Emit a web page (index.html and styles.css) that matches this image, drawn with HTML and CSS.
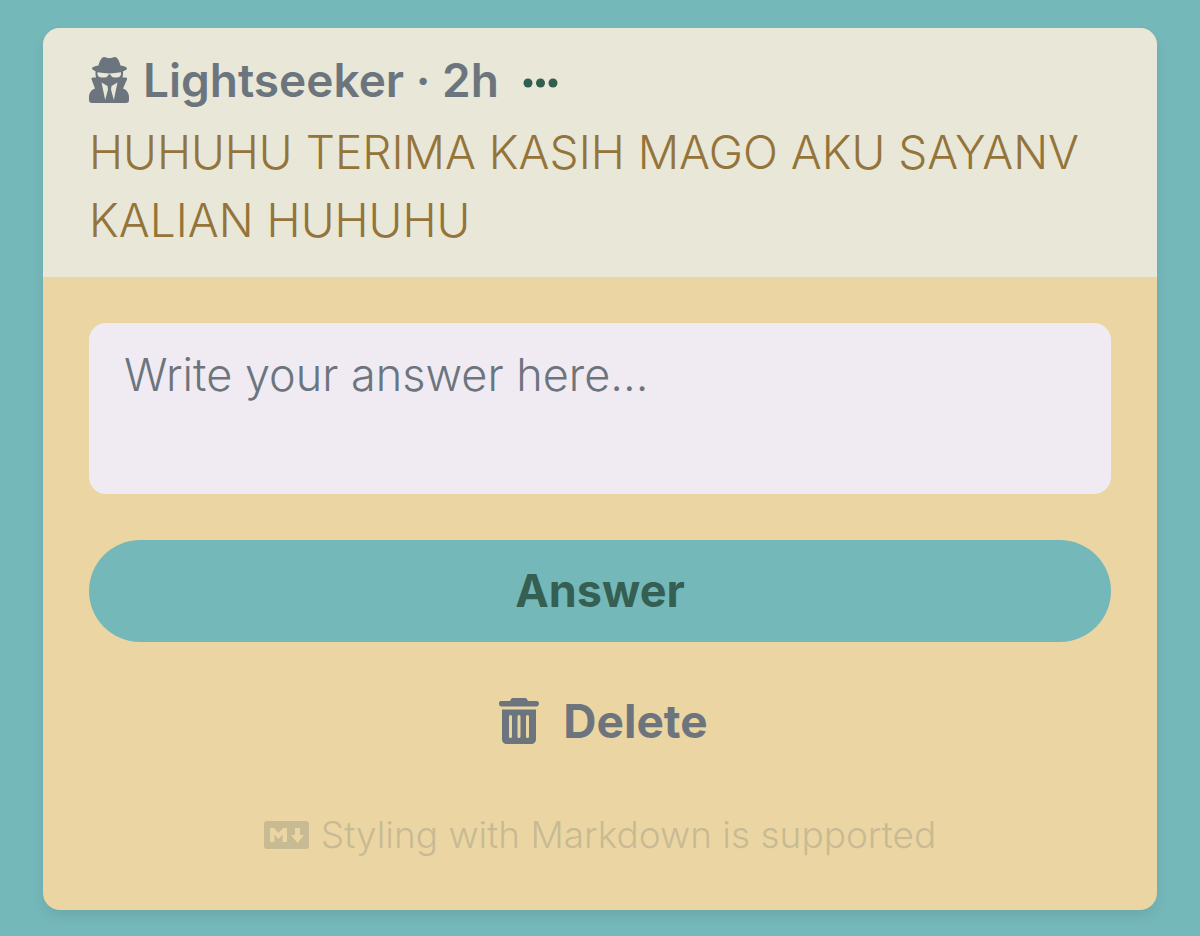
FILE: index.html
```html
<!DOCTYPE html>
<html lang="en">
<head>
<meta charset="utf-8">
<meta name="viewport" content="width=device-width, initial-scale=1">
<title>Inbox</title>
<link rel="stylesheet" href="styles.css">
</head>
<body>
<main class="card">
  <header class="card-header">
    <div class="meta">
      <svg class="icon-spy" viewBox="0 0 40 46" aria-hidden="true">
        <path fill="currentColor" d="M6 14C4 13 3 12.300 3 11.500C3 10.300 5.500 9.300 9.500 8.600C10.500 4.500 12.500 0 15 0C17 0 18.500 1.300 20.500 1.300S24 0 26 0C28.500 0 30.500 4.500 31.500 8.600C35.500 9.300 38 10.300 38 11.500C38 12.300 37 13 35 14C32 15 28 15.600 20.500 15.600S9 15 6 14Z"/>
        <path fill="currentColor" d="M6.500 14H34V17.500L33.500 20.500H36.500C38 20.500 38.400 21.400 38 22.400L34 31.500C37.500 32.500 40 36 40 40V43Q40 46 37 46H3Q0 46 0 43V40C0 36 2.500 32.500 6 31.500L2.600 22.400C2.200 21.400 2.700 20.500 4 20.500H7L6.500 17.500Z"/>
        <path class="spy-gap" d="M8.500 15.300Q20 17.600 32 15.300V17.300C31.500 19.600 30 20.500 28 20.500H25.500C23 20.500 22.300 19 21.800 17.900C21.300 17 19.700 17 19.200 17.900C18.700 19 18 20.500 15.500 20.500H12.500C10.500 20.500 9 19.600 8.500 17.300Z"/>
        <path class="spy-gap" d="M12.500 25.500L18.500 29L19 32.500L16.200 43Z M28.500 25.500L22.500 29L22 32.500L24.800 43Z"/>
      </svg>
      <span class="author">Lightseeker · 2h</span>
      <button class="more" type="button" aria-label="More options">
        <svg class="icon-dots" viewBox="0 0 36 10" aria-hidden="true"><g fill="currentColor"><circle cx="5" cy="5" r="4.500"/><circle cx="17.500" cy="5" r="4.500"/><circle cx="30" cy="5" r="4.500"/></g></svg>
      </button>
    </div>
    <p class="question">HUHUHU TERIMA KASIH MAGO AKU SAYANV KALIAN HUHUHU</p>
  </header>
  <form class="card-body">
    <textarea class="answer-box" aria-label="Your answer" placeholder="Write your answer here..."></textarea>
    <button class="answer" type="button">Answer</button>
    <button class="delete" type="button">
      <svg class="icon-trash" viewBox="0 0 40 46" aria-hidden="true">
        <path fill="currentColor" d="M2.500 3H11L12 1.200C12.500 .4 13 0 14 0H26C27 0 27.500 .4 28 1.200L29 3H37.500C39 3 40 4 40 5.500S39 8.500 37.500 8.500H2.500C1 8.500 0 7.500 0 5.500S1 3 2.500 3Z"/>
        <path fill="currentColor" fill-rule="evenodd" d="M3 11.500H37V41C37 44 35 46 32 46H8C5 46 3 44 3 41ZM11.500 17A1.500 1.500 0 0 0 10 18.500V38.500A1.500 1.500 0 0 0 13 38.500V18.500A1.500 1.500 0 0 0 11.500 17ZM20 17A1.500 1.500 0 0 0 18.500 18.500V38.500A1.500 1.500 0 0 0 21.500 38.500V18.500A1.500 1.500 0 0 0 20 17ZM28.500 17A1.500 1.500 0 0 0 27 18.500V38.500A1.500 1.500 0 0 0 30 38.500V18.500A1.500 1.500 0 0 0 28.500 17Z"/>
      </svg>
      <span>Delete</span>
    </button>
    <p class="hint">
      <svg class="icon-md" viewBox="0 0 45 28" aria-hidden="true">
        <path fill="currentColor" fill-rule="evenodd" d="M3 0H42Q45 0 45 3V25Q45 28 42 28H3Q0 28 0 25V3Q0 0 3 0ZM6 21H10.500V13.500L14.500 18L18.500 13.500V21H23V7H19L14.500 12L10 7H6ZM31 7V14H27L33.500 22L40 14H36V7Z"/>
      </svg>
      <span>Styling with Markdown is supported</span>
    </p>
  </form>
</main>
</body>
</html>
```
FILE: styles.css
```css
* {
  box-sizing: border-box;
}

body {
  margin: 0;
  padding: 28px 43px 24px;
  background: #75b8ba;
  color: #6c757d;
  font-family: Inter, "Open Sans", sans-serif;
  font-size: 46px;
  line-height: 68px;
}

button,
textarea {
  font: inherit;
  border: 0;
}

.card {
  overflow: hidden;
  border-radius: 17px;
  background: #ebd6a3;
  box-shadow: 0 6px 12px rgb(0 0 0 / 8%);
}

.card-header {
  padding: 18px 46px 23px;
  background: #e9e8d8;
}

.meta {
  display: flex;
  align-items: center;
  font-weight: 600;
}

.icon-spy {
  width: 40px;
  height: 46px;
  margin-right: 14px;
}

.spy-gap {
  fill: #e9e8d8;
}

.more {
  display: flex;
  margin-left: 24px;
  padding: 6px 0 0;
  background: none;
  color: #305f50;
}

.icon-dots {
  width: 36px;
  height: 10px;
}

.question {
  margin: 4px 0 0;
  color: #94743a;
  font-weight: 350;
}

.card-body {
  display: flex;
  flex-direction: column;
  padding: 46px;
}

.answer-box {
  height: 171px;
  padding: 18px 35px;
  border-radius: 17px;
  background: #f0ebf3;
  font-size: 45px;
  font-weight: 300;
  resize: none;
}

.answer-box::placeholder {
  color: #6c757d;
  opacity: 1;
}

.answer {
  margin-top: 46px;
  padding: 17px;
  border-radius: 52px;
  background: #75b8ba;
  color: #355f52;
  font-size: 45px;
  font-weight: 700;
}

.delete {
  display: flex;
  justify-content: center;
  align-items: center;
  gap: 24px;
  margin-top: 28px;
  padding: 17px 17px 17px 24px;
  background: none;
  color: #6c757d;
  font-weight: 700;
}

.icon-trash {
  width: 40px;
  height: 46px;
}

.hint {
  display: flex;
  justify-content: center;
  align-items: center;
  gap: 12px;
  margin: 34px 0 0;
  color: #c8ba93;
  font-size: 37px;
  font-weight: 300;
  line-height: 58px;
}

.icon-md {
  width: 45px;
  height: 28px;
}
```
